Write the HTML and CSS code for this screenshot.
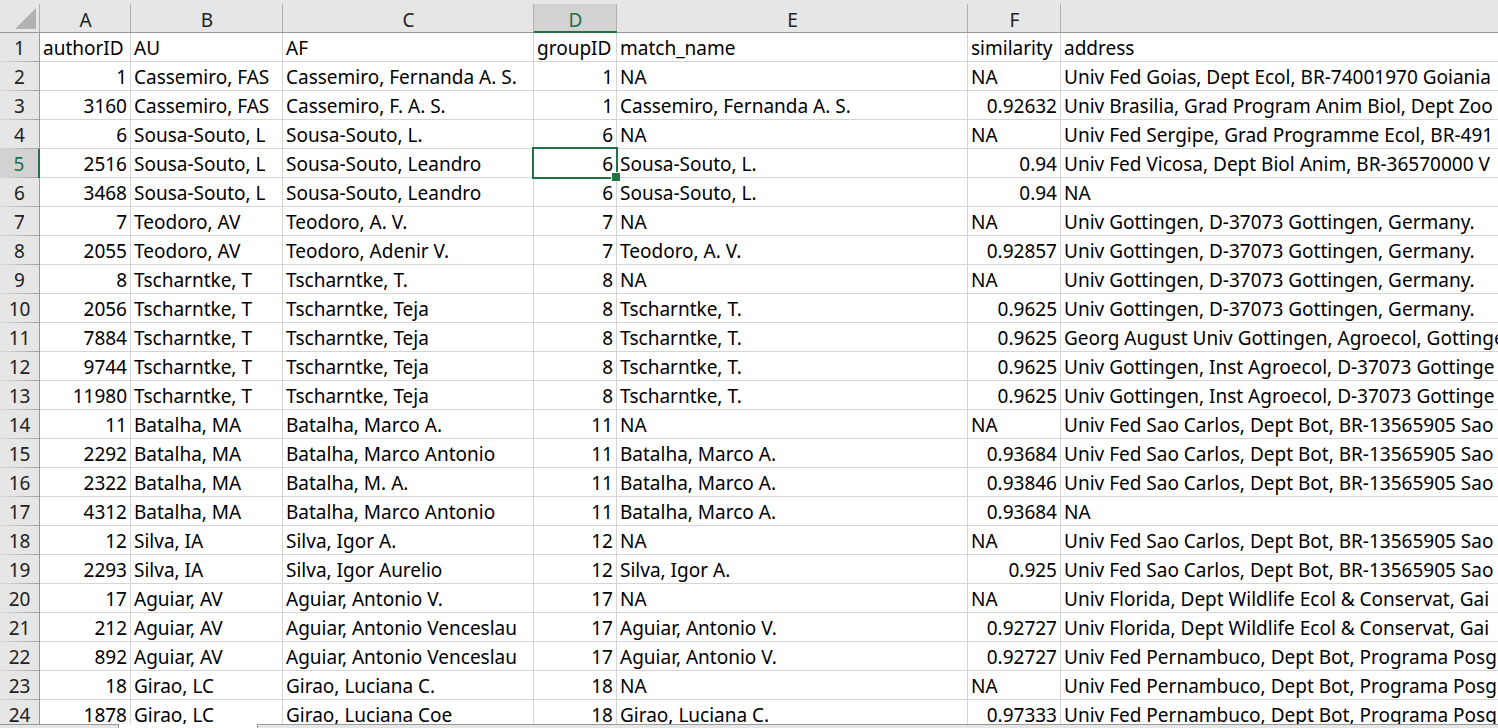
FILE: index.html
```html
<!DOCTYPE html>
<html lang="en">
<head>
<meta charset="utf-8">
<title>Author matches</title>
<link rel="stylesheet" href="styles.css">
</head>
<body>
<main class="sheet">
<table class="grid">
<colgroup><col class="col-head"><col class="col-a"><col class="col-b"><col class="col-c"><col class="col-d"><col class="col-e"><col class="col-f"><col></colgroup>
<thead>
<tr><td class="corner"><svg class="select-all" width="21" height="21" viewBox="0 0 21 21" aria-hidden="true"><path d="M21 0V21H0Z"/></svg></td><th scope="col">A</th><th scope="col">B</th><th scope="col">C</th><th scope="col" class="active">D</th><th scope="col">E</th><th scope="col">F</th><td></td></tr>
</thead>
<tbody>
<tr><th scope="row">1</th><td>authorID</td><td>AU</td><td>AF</td><td>groupID</td><td>match_name</td><td>similarity</td><td>address</td></tr>
<tr><th scope="row">2</th><td class="num">1</td><td>Cassemiro, FAS</td><td>Cassemiro, Fernanda A. S.</td><td class="num">1</td><td>NA</td><td>NA</td><td>Univ Fed Goias, Dept Ecol, BR-74001970 Goiania</td></tr>
<tr><th scope="row">3</th><td class="num">3160</td><td>Cassemiro, FAS</td><td>Cassemiro, F. A. S.</td><td class="num">1</td><td>Cassemiro, Fernanda A. S.</td><td class="num">0.92632</td><td>Univ Brasilia, Grad Program Anim Biol, Dept Zoo</td></tr>
<tr><th scope="row">4</th><td class="num">6</td><td>Sousa-Souto, L</td><td>Sousa-Souto, L.</td><td class="num">6</td><td>NA</td><td>NA</td><td>Univ Fed Sergipe, Grad Programme Ecol, BR-491</td></tr>
<tr><th scope="row" class="active">5</th><td class="num">2516</td><td>Sousa-Souto, L</td><td>Sousa-Souto, Leandro</td><td class="num selected">6</td><td>Sousa-Souto, L.</td><td class="num">0.94</td><td>Univ Fed Vicosa, Dept Biol Anim, BR-36570000 V</td></tr>
<tr><th scope="row">6</th><td class="num">3468</td><td>Sousa-Souto, L</td><td>Sousa-Souto, Leandro</td><td class="num">6</td><td>Sousa-Souto, L.</td><td class="num">0.94</td><td>NA</td></tr>
<tr><th scope="row">7</th><td class="num">7</td><td>Teodoro, AV</td><td>Teodoro, A. V.</td><td class="num">7</td><td>NA</td><td>NA</td><td>Univ Gottingen, D-37073 Gottingen, Germany.</td></tr>
<tr><th scope="row">8</th><td class="num">2055</td><td>Teodoro, AV</td><td>Teodoro, Adenir V.</td><td class="num">7</td><td>Teodoro, A. V.</td><td class="num">0.92857</td><td>Univ Gottingen, D-37073 Gottingen, Germany.</td></tr>
<tr><th scope="row">9</th><td class="num">8</td><td>Tscharntke, T</td><td>Tscharntke, T.</td><td class="num">8</td><td>NA</td><td>NA</td><td>Univ Gottingen, D-37073 Gottingen, Germany.</td></tr>
<tr><th scope="row">10</th><td class="num">2056</td><td>Tscharntke, T</td><td>Tscharntke, Teja</td><td class="num">8</td><td>Tscharntke, T.</td><td class="num">0.9625</td><td>Univ Gottingen, D-37073 Gottingen, Germany.</td></tr>
<tr><th scope="row">11</th><td class="num">7884</td><td>Tscharntke, T</td><td>Tscharntke, Teja</td><td class="num">8</td><td>Tscharntke, T.</td><td class="num">0.9625</td><td>Georg August Univ Gottingen, Agroecol, Gottinge</td></tr>
<tr><th scope="row">12</th><td class="num">9744</td><td>Tscharntke, T</td><td>Tscharntke, Teja</td><td class="num">8</td><td>Tscharntke, T.</td><td class="num">0.9625</td><td>Univ Gottingen, Inst Agroecol, D-37073 Gottinge</td></tr>
<tr><th scope="row">13</th><td class="num">11980</td><td>Tscharntke, T</td><td>Tscharntke, Teja</td><td class="num">8</td><td>Tscharntke, T.</td><td class="num">0.9625</td><td>Univ Gottingen, Inst Agroecol, D-37073 Gottinge</td></tr>
<tr><th scope="row">14</th><td class="num">11</td><td>Batalha, MA</td><td>Batalha, Marco A.</td><td class="num">11</td><td>NA</td><td>NA</td><td>Univ Fed Sao Carlos, Dept Bot, BR-13565905 Sao</td></tr>
<tr><th scope="row">15</th><td class="num">2292</td><td>Batalha, MA</td><td>Batalha, Marco Antonio</td><td class="num">11</td><td>Batalha, Marco A.</td><td class="num">0.93684</td><td>Univ Fed Sao Carlos, Dept Bot, BR-13565905 Sao</td></tr>
<tr><th scope="row">16</th><td class="num">2322</td><td>Batalha, MA</td><td>Batalha, M. A.</td><td class="num">11</td><td>Batalha, Marco A.</td><td class="num">0.93846</td><td>Univ Fed Sao Carlos, Dept Bot, BR-13565905 Sao</td></tr>
<tr><th scope="row">17</th><td class="num">4312</td><td>Batalha, MA</td><td>Batalha, Marco Antonio</td><td class="num">11</td><td>Batalha, Marco A.</td><td class="num">0.93684</td><td>NA</td></tr>
<tr><th scope="row">18</th><td class="num">12</td><td>Silva, IA</td><td>Silva, Igor A.</td><td class="num">12</td><td>NA</td><td>NA</td><td>Univ Fed Sao Carlos, Dept Bot, BR-13565905 Sao</td></tr>
<tr><th scope="row">19</th><td class="num">2293</td><td>Silva, IA</td><td>Silva, Igor Aurelio</td><td class="num">12</td><td>Silva, Igor A.</td><td class="num">0.925</td><td>Univ Fed Sao Carlos, Dept Bot, BR-13565905 Sao</td></tr>
<tr><th scope="row">20</th><td class="num">17</td><td>Aguiar, AV</td><td>Aguiar, Antonio V.</td><td class="num">17</td><td>NA</td><td>NA</td><td>Univ Florida, Dept Wildlife Ecol &amp; Conservat, Gai</td></tr>
<tr><th scope="row">21</th><td class="num">212</td><td>Aguiar, AV</td><td>Aguiar, Antonio Venceslau</td><td class="num">17</td><td>Aguiar, Antonio V.</td><td class="num">0.92727</td><td>Univ Florida, Dept Wildlife Ecol &amp; Conservat, Gai</td></tr>
<tr><th scope="row">22</th><td class="num">892</td><td>Aguiar, AV</td><td>Aguiar, Antonio Venceslau</td><td class="num">17</td><td>Aguiar, Antonio V.</td><td class="num">0.92727</td><td>Univ Fed Pernambuco, Dept Bot, Programa Posg</td></tr>
<tr><th scope="row">23</th><td class="num">18</td><td>Girao, LC</td><td>Girao, Luciana C.</td><td class="num">18</td><td>NA</td><td>NA</td><td>Univ Fed Pernambuco, Dept Bot, Programa Posg</td></tr>
<tr><th scope="row">24</th><td class="num">1878</td><td>Girao, LC</td><td>Girao, Luciana Coe</td><td class="num">18</td><td>Girao, Luciana C.</td><td class="num">0.97333</td><td>Univ Fed Pernambuco, Dept Bot, Programa Posg</td></tr>
</tbody>
</table>
</main>
<footer class="tabs"><div class="tabs-nav"></div><div class="tab-current"></div><div class="tabs-rest"></div></footer>
</body>
</html>
```
FILE: styles.css
```css
* {
  box-sizing: border-box;
}

body {
  margin: 0;
  height: 100vh;
  display: flex;
  flex-direction: column;
  overflow: hidden;
  background: #fff;
  color: #000;
  font: 19px/26px "Noto Sans", sans-serif;
}

.sheet {
  flex: 1;
  min-height: 0;
  overflow: hidden;
}

.grid {
  width: 100%;
  table-layout: fixed;
  border-collapse: separate;
  border-spacing: 0;
}

.col-head { width: 40px; }
.col-a { width: 91px; }
.col-b { width: 152px; }
.col-c { width: 251px; }
.col-d { width: 83px; }
.col-e { width: 351px; }
.col-f { width: 93px; }

.grid th,
.grid td {
  height: 29px;
  padding: 2px 3px 0;
  overflow: hidden;
  white-space: nowrap;
  text-align: left;
  font-weight: 400;
  border-right: 1px solid #d4d4d4;
  border-bottom: 1px solid #d4d4d4;
}

.grid td:last-child {
  padding-right: 0;
  border-right: 0;
}

.grid td.num {
  text-align: right;
}

/* Column letters */
.grid thead th,
.grid thead td {
  height: 33px;
  padding: 9px 0 0;
  line-height: 22px;
  text-align: center;
  vertical-align: top;
  color: #222;
  background: linear-gradient(#b0b0b0, #b0b0b0) right bottom / 1px 28px no-repeat #e6e6e6;
  border-right: 0;
  border-bottom-color: #999;
}

.grid thead td:last-child {
  background: #e6e6e6;
}

.grid thead th.active {
  color: #217346;
  background:
    linear-gradient(#e6e6e6, #e6e6e6) left top / 100% 4px no-repeat,
    linear-gradient(#b0b0b0, #b0b0b0) right bottom / 1px 100% no-repeat #d2d2d2;
  border-bottom: 2px solid #217346;
}

.grid thead .corner {
  padding: 8px 0 0 15px;
}

.select-all {
  display: block;
  fill: #b2b2b2;
}

/* Row numbers */
.grid tbody th {
  padding: 1px 0 0;
  text-align: center;
  color: #222;
  background: linear-gradient(to right, #dcdcdc, #a0a0a0) left bottom / 100% 1px no-repeat #e6e6e6;
  border-right-color: #999;
  border-bottom: 0;
}

.grid tbody th.active {
  color: #217346;
  background-color: #d2d2d2;
  border-right: 2px solid #217346;
}

/* Cell cursor with its fill handle */
.grid td.selected {
  position: relative;
  overflow: visible;
}

.selected::before {
  content: "";
  position: absolute;
  inset: -2px;
  border: 2px solid #217346;
}

.selected::after {
  content: "";
  position: absolute;
  right: -4px;
  bottom: -4px;
  width: 8px;
  height: 8px;
  background: #217346;
  border: solid #fff;
  border-width: 1px 0 0 1px;
}

.tabs {
  display: flex;
  height: 4px;
}

.tabs-nav,
.tabs-rest {
  background: #e6e6e6;
  border-top: 1px solid #999;
}

.tabs-nav {
  width: 119px;
  border-right: 1px solid #999;
}

.tab-current {
  width: 138px;
  background: #fff;
}

.tabs-rest {
  flex: 1;
  border-left: 1px solid #999;
}
```
